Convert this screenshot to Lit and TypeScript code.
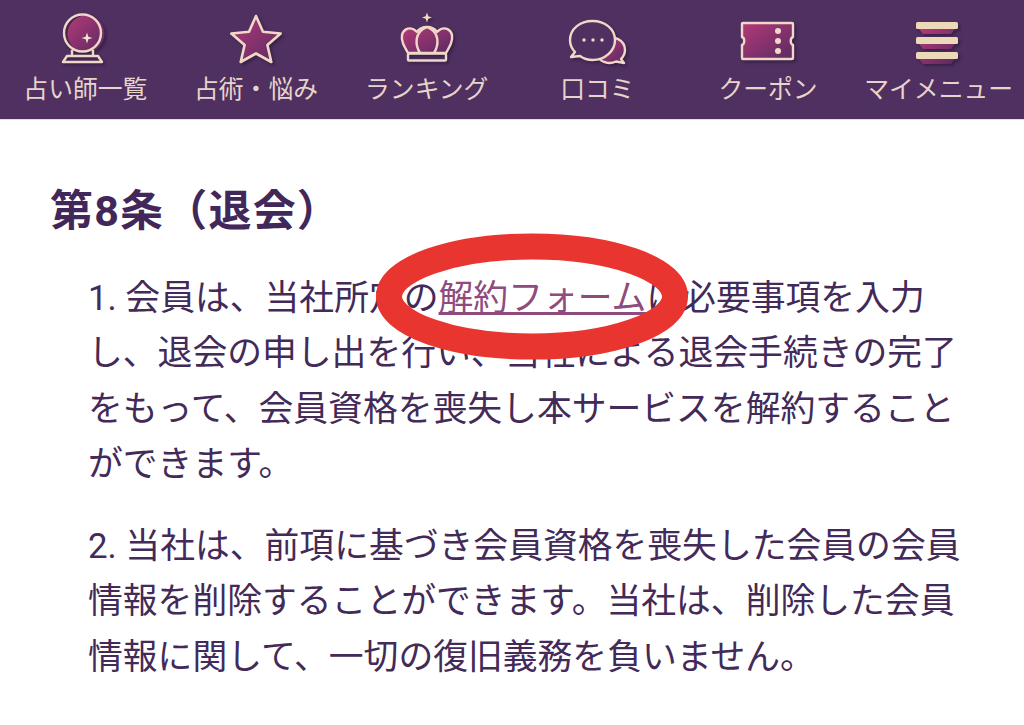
import { LitElement, html, css, svg } from "lit";
import { customElement } from "lit/decorators.js";

const defs = svg`<defs><linearGradient id="g" x1="0" y1="0" x2="1" y2="1"><stop offset="0" stop-color="#b43a78"/><stop offset="1" stop-color="#5a2a62"/></linearGradient></defs>`;

const icons = [
  svg`${defs}
    <circle cx="33" cy="24" r="18.5" fill="url(#g)"/>
    <circle cx="29.5" cy="23" r="18.5" fill="none" stroke="#f0d8c8" stroke-width="2.4"/>
    <path d="M34 22.5l1.3 4.2 4.2 1.3-4.2 1.3-1.3 4.2-1.3-4.2-4.2-1.3 4.2-1.3z" fill="#f5e3d3"/>
    <path d="M19 40v6M40 40v6M14 46h31l4 6H10z" fill="none" stroke="#f0d8c8" stroke-width="2.4" stroke-linejoin="round"/>`,
  svg`${defs}
    <path d="M32 6 39 21.8 56.7 23.500 43.4 35 47.3 52 32 43.500 16.7 52 20.6 35 7.3 23.500 25 21.800Z" fill="url(#g)" stroke="#f0d8c8" stroke-width="2.6" stroke-linejoin="round"/>`,
  svg`${defs}
    <path d="M32 2.5l1.3 3.7 3.7 1.3-3.7 1.3-1.3 3.7-1.3-3.7-3.7-1.3 3.7-1.3z" fill="#efdcb8"/>
    <path d="M13 43C9 36 6 31 7 25 8 20 13 17 18 19 20 20 21 21 22 22 24 19 28 17 32 17 36 17 40 19 42 22 43 21 44 20 46 19 51 17 56 20 57 25 58 31 55 36 51 43Z" fill="url(#g)" stroke="#f0d8c8" stroke-width="2.4" stroke-linejoin="round"/>
    <path d="M25 43C20 35 19 22 32 17 45 22 44 35 39 43" fill="none" stroke="#f0d8c8" stroke-width="2.4"/>
    <rect x="13" y="43.5" width="38" height="7" rx="1" fill="none" stroke="#f0d8c8" stroke-width="2.4"/>`,
  svg`${defs}
    <path d="M37 29C48 24 60 30 60 40 60 44 58 47 56 49L59 53 51 51.500C44 55 36 52 33 47Z" fill="url(#g)" stroke="#f0d8c8" stroke-width="2.4" stroke-linejoin="round"/>
    <path d="M27.500 11C15 11 5 19 5 30 5 35 7 39 10 42L6 47 15 46C19 49 23 50 27.500 50 40 50 50 41 50 30 50 19 40 11 27.500 11Z" fill="#4f3060" stroke="#f0d8c8" stroke-width="2.4" stroke-linejoin="round"/>
    <circle cx="19" cy="30" r="1.700" fill="#f0d8c8"/><circle cx="28" cy="30" r="1.700" fill="#f0d8c8"/><circle cx="37" cy="30" r="1.700" fill="#f0d8c8"/>`,
  svg`${defs}
    <path d="M6 13.500Q6 13 7 13H56Q57 13 57 14V27C54 28 54 34 57 35V48Q57 49 56 49H7Q6 49 6 48V35C9 34 9 28 6 27Z" fill="url(#g)" stroke="#f0d8c8" stroke-width="2.4" stroke-linejoin="round"/>
    <circle cx="42" cy="21" r="3" fill="#f0d8c8"/><circle cx="42" cy="31" r="3" fill="#f0d8c8"/><circle cx="42" cy="41" r="3" fill="#f0d8c8"/>`,
  svg`${defs}
    <path d="M12 19H48L44 24H16ZM12 34H48L44 39H16ZM12 49H48L44 54H16Z" fill="url(#g)"/>
    <rect x="9" y="12" width="42" height="7" rx="1.500" fill="#ecd9b8"/>
    <rect x="9" y="27" width="42" height="7" rx="1.500" fill="#ecd9b8"/>
    <rect x="9" y="42" width="42" height="7" rx="1.500" fill="#ecd9b8"/>`,
];
const labels = ["占い師一覧", "占術・悩み", "ランキング", "口コミ", "クーポン", "マイメニュー"];

@customElement("app-root")
export class AppRoot extends LitElement {
  static styles = css`
    :host {
      display: block;
      position: relative;
      width: 1024px;
      height: 725px;
      overflow: hidden;
      background: #fff;
      font-family: Roboto, "Noto Sans CJK JP", sans-serif;
      color: #432a58;
    }
    nav {
      display: grid;
      grid-template-columns: repeat(6, 1fr);
      height: 120px;
      box-sizing: border-box;
      padding-top: 10px;
      background: #4f3060;
      border-bottom: 1px solid #e4dde8;
    }
    .item {
      display: flex;
      flex-direction: column;
      align-items: center;
    }
    .item svg {
      display: block;
      width: 64px;
      height: 56px;
      overflow: visible;
      filter: drop-shadow(2px 2px 1.5px rgba(30, 12, 40, 0.45));
    }
    .label {
      font-size: 24.8px;
      line-height: 36px;
      margin-top: 6px;
      color: #e6d5cb;
      white-space: nowrap;
    }
    main {
      padding: 0 50px;
    }
    h1 {
      margin: 61px 0 0;
      font-size: 43px;
      line-height: 60px;
      letter-spacing: 1.2px;
      font-weight: 700;
      color: #42285a;
    }
    p {
      margin: 0 0 26px 38px;
      width: 885px;
      font-size: 34.8px;
      line-height: 55.500px;
      color: #432a58;
    }
    .first {
      margin-top: 29.500px;
    }
    a {
      color: #8f4a7e;
      text-decoration: underline;
    }
    .mark {
      position: absolute;
      left: 370px;
      top: 228px;
      width: 325px;
      height: 137px;
    }
  `;

  render() {
    return html`
      <nav>
        ${labels.map(
          (l, i) => html`<div class="item">
            <svg viewBox="0 0 64 56">${icons[i]}</svg>
            <span class="label">${l}</span>
          </div>`
        )}
      </nav>
      <main>
        <h1>第8条（退会）</h1>
        <p class="first">1. 会員は、当社所定の<a href="#">解約フォーム</a>に必要事項を入力し、退会の申し出を行い、当社による退会手続きの完了をもって、会員資格を喪失し本サービスを解約することができます。</p>
        <p>2. 当社は、前項に基づき会員資格を喪失した会員の会員情報を削除することができます。当社は、削除した会員情報に関して、一切の復旧義務を負いません。</p>
      </main>
      <svg class="mark" viewBox="370 228 325 137">
        <ellipse cx="532" cy="296.500" rx="143" ry="50" fill="none" stroke="#e93530" stroke-width="26"/>
      </svg>
    `;
  }
}
